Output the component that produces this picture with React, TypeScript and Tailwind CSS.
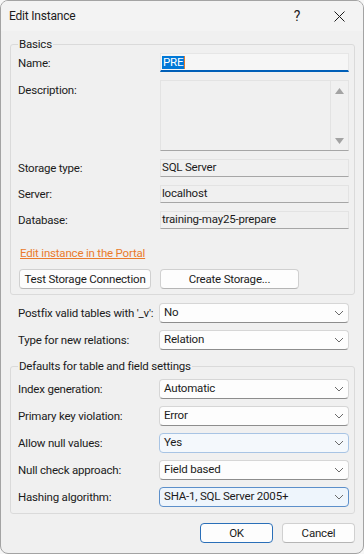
import type { ReactNode } from 'react'

const FONT = "font-['Roboto',_'Noto_Sans',_sans-serif]"

function Chevron() {
  return (
    <svg width="10" height="6" viewBox="0 0 10 6" className="shrink-0">
      <path d="M1 1 L5 5 L9 1" fill="none" stroke="#6b6b6b" strokeWidth="1" />
    </svg>
  )
}

function Select({ value, variant }: { value: string; variant?: 'hover' | 'focus' }) {
  const cls =
    variant === 'focus'
      ? 'bg-[#eef5fc] border-[#5c8fca]'
      : variant === 'hover'
        ? 'bg-[#f4f8fc] border-[#a8c4e4]'
        : 'bg-[#fdfdfd] border-[#d6d6d6] border-b-[#8d8d8d]'
  return (
    <div
      className={`w-[190px] h-[20px] border rounded-[4px] flex items-center justify-between pl-[4px] pr-[4px] text-[#1b1b1b] ${cls}`}
    >
      <span className="leading-none whitespace-nowrap">{value}</span>
      <Chevron />
    </div>
  )
}

function ReadBox({ value }: { value: string }) {
  return (
    <div className="w-[189px] h-[18px] mx-[1px] border border-[#e3e3e3] border-b-[#a6a6a6] bg-[#f0f0f0] flex items-center pl-[1px] text-[#1b1b1b]">
      <span className="leading-none whitespace-nowrap">{value}</span>
    </div>
  )
}

function Row({ label, children, top }: { label: string; children: ReactNode; top?: boolean }) {
  return (
    <div className={`flex ${top ? 'items-start' : 'items-center'}`}>
      <div className={`w-[141px] shrink-0 whitespace-nowrap text-[#1b1b1b] ${top ? 'pt-[2px]' : ''}`}>{label}</div>
      {children}
    </div>
  )
}

function Group({ title, children, className }: { title: string; children: ReactNode; className?: string }) {
  return (
    <fieldset className={`border border-[#dadada] rounded-[3px] pl-[7px] pr-[4px] ${className ?? ''}`}>
      <legend className="px-[1px] leading-[16px] whitespace-nowrap text-[#1b1b1b]">{title}</legend>
      {children}
    </fieldset>
  )
}

function Button({ children, primary, className }: { children: ReactNode; primary?: boolean; className?: string }) {
  return (
    <button
      className={`h-[20px] rounded-[4px] border flex items-center justify-center whitespace-nowrap text-[#1b1b1b] ${
        primary ? 'border-[#2a6fb8] bg-[#fdfdfd]' : 'border-[#d0d0d0] border-b-[#b5b5b5] bg-[#fdfdfd]'
      } ${className ?? ''}`}
    >
      {children}
    </button>
  )
}

export default function App() {
  return (
    <div className={`w-[364px] h-[554px] bg-[#f7f7f7] ${FONT} text-[11.5px] tracking-[-0.2px]`}>
      <div className="w-full h-full border border-[#a3a3a3] rounded-[8px] overflow-hidden bg-[#f0f0f0] flex flex-col">
        <div className="h-[30px] shrink-0 bg-[#f3f3f3] flex items-center pl-[8px]">
          <span className="flex-1 text-[12px] text-[#1b1b1b]">Edit Instance</span>
          <span className="w-[24px] text-center text-[14px] text-[#1b1b1b] mr-[25px]">?</span>
          <svg width="11" height="11" viewBox="0 0 11 11" className="mr-[18px]">
            <path d="M0.5 0.5 L10.5 10.5 M10.5 0.5 L0.5 10.5" stroke="#1b1b1b" strokeWidth="1" />
          </svg>
        </div>

        <div className="pl-[9px] pr-[8px] flex flex-col leading-[16px]">
          <Group title="Basics" className="mt-[5px] pb-[5px]">
            <div className="flex flex-col gap-[8px] pt-[1px]">
              <Row label="Name:">
                <div className="w-[189px] h-[19px] mx-[1px] border border-[#e6e6e6] border-b-2 border-b-[#005fb8] bg-[#f6f6f6] flex items-center pl-[1px]">
                  <span className="bg-[#0078d7] text-white leading-[13px] px-[1px]">PRE</span>
                  <span className="w-[1px] h-[13px] bg-[#e07a2a]" />
                </div>
              </Row>
              <Row label="Description:" top>
                <div className="w-[189px] h-[71px] mx-[1px] border border-[#e3e3e3] border-b-[#a6a6a6] bg-[#f0f0f0] flex justify-end">
                  <div className="w-[18px] border-l border-[#e3e3e3] flex flex-col items-center justify-between pt-[7px] pb-[6px]">
                    <svg width="9" height="6" viewBox="0 0 9 6">
                      <path d="M4.5 0 L9 6 L0 6 Z" fill="#a3a3a3" />
                    </svg>
                    <svg width="9" height="6" viewBox="0 0 9 6">
                      <path d="M0 0 L9 0 L4.5 6 Z" fill="#a3a3a3" />
                    </svg>
                  </div>
                </div>
              </Row>
              <Row label="Storage type:">
                <ReadBox value="SQL Server" />
              </Row>
              <Row label="Server:">
                <ReadBox value="localhost" />
              </Row>
              <Row label="Database:">
                <ReadBox value="training-may25-prepare" />
              </Row>
            </div>
            <div className="mt-[16px] pl-[2px] leading-[16px]">
              <span className="text-[#ea7b2c] underline">Edit instance in the Portal</span>
            </div>
            <div className="mt-[8px] flex gap-[9px] pl-[1px]">
              <Button className="w-[132px]">Test Storage Connection</Button>
              <Button className="w-[139px]">Create Storage...</Button>
            </div>
          </Group>

          <div className="mt-[8px] pl-[8px] flex flex-col gap-[7px]">
            <Row label="Postfix valid tables with '_v':">
              <Select value="No" />
            </Row>
            <Row label="Type for new relations:">
              <Select value="Relation" />
            </Row>
          </div>

          <Group title="Defaults for table and field settings" className="mt-[8px] pb-[6px]">
            <div className="flex flex-col gap-[7px] pt-[5px]">
              <Row label="Index generation:">
                <Select value="Automatic" />
              </Row>
              <Row label="Primary key violation:">
                <Select value="Error" />
              </Row>
              <Row label="Allow null values:">
                <Select value="Yes" variant="hover" />
              </Row>
              <Row label="Null check approach:">
                <Select value="Field based" />
              </Row>
              <Row label="Hashing algorithm:">
                <Select value="SHA-1, SQL Server 2005+" variant="focus" />
              </Row>
            </div>
          </Group>

          <div className="mt-[9px] flex justify-end gap-[9px] pr-[0px]">
            <Button primary className="w-[73px]">OK</Button>
            <Button className="w-[73px]">Cancel</Button>
          </div>
        </div>
      </div>
    </div>
  )
}
